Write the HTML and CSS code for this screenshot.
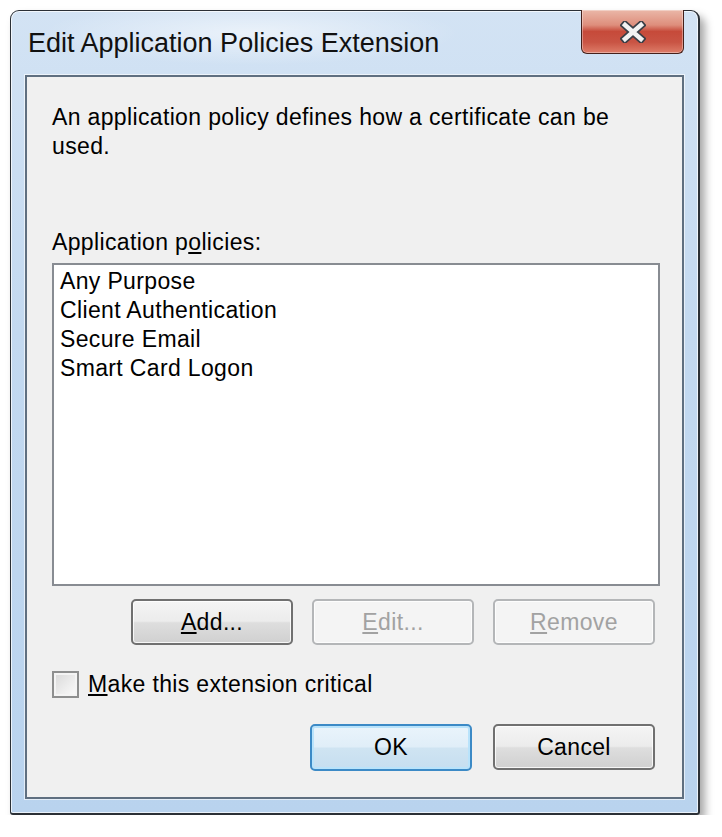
FILE: index.html
```html
<!DOCTYPE html>
<html>
<head>
	<meta charset="UTF-8">
	<title>Edit Application Policies Extension</title>
	<link rel="stylesheet" href="styles.css">
</head>
<body>
	<div class="window">
		<div class="titlebar">
			<div class="title">Edit Application Policies Extension</div>
			<div class="close">
				<svg width="26" height="22" viewBox="0 0 26 22">
					<path d="M5 4 L21 18 M21 4 L5 18" stroke="#3a3f47" stroke-width="8" stroke-linecap="square"/>
					<path d="M5 4 L21 18 M21 4 L5 18" stroke="#f2f2f2" stroke-width="4.5" stroke-linecap="square"/>
				</svg>
			</div>
		</div>

		<div class="panel">
			<p class="desc">An application policy defines how a certificate can be<br>used.</p>

			<div class="label">Application p<u>o</u>licies:</div>
			<div class="listbox">
				<div class="item">Any Purpose</div>
				<div class="item">Client Authentication</div>
				<div class="item">Secure Email</div>
				<div class="item">Smart Card Logon</div>
			</div>

			<div class="button-row">
				<button class="btn"><u>A</u>dd...</button>
				<button class="btn off"><u>E</u>dit...</button>
				<button class="btn off"><u>R</u>emove</button>
			</div>

			<label class="checkrow">
				<span class="check"></span>
				<span><u>M</u>ake this extension critical</span>
			</label>

			<div class="button-row bottom">
				<button class="btn default">OK</button>
				<button class="btn">Cancel</button>
			</div>
		</div>
	</div>
</body>
</html>
```

FILE: styles.css
```css
body {
	margin: 0;
	background: #ffffff;
	font-family: "Liberation Sans", Arial, sans-serif;
	color: #000;
}

.window {
	box-sizing: border-box;
	margin: 10px 0 0 10px;
	width: 690px;
	height: 805px;
	border: 1px solid #2b3036;
	border-right-width: 2px;
	border-bottom-width: 2px;
	border-radius: 9px 9px 3px 3px;
	background:
		radial-gradient(ellipse 260px 40px at 240px 22px, rgba(255,255,255,0.55), rgba(255,255,255,0) 80%),
		linear-gradient(180deg, #d3e3f4 0%, #c3d9f0 40%, #b9d3ee 100%);
	box-shadow: inset 0 0 0 1px rgba(255,255,255,0.7), 5px 6px 9px rgba(0,0,0,0.35);
	padding: 0 14px 14px 14px;
}

.titlebar {
	display: flex;
	justify-content: space-between;
	height: 64px;
	padding-left: 3px;
}

.title {
	font-size: 27px;
	padding-top: 17px;
	color: #111;
}

.close {
	box-sizing: border-box;
	width: 103px;
	height: 44px;
	margin-top: -1px;
	border: 1px solid #45201a;
	border-top: none;
	border-radius: 0 0 6px 6px;
	background: linear-gradient(180deg, #eab7a8 0%, #de8e7c 35%, #c64a3a 50%, #c95444 75%, #de7d69 100%);
	box-shadow: inset 0 0 0 1px rgba(255,255,255,0.35);
	display: flex;
	align-items: center;
	justify-content: center;
}

.panel {
	box-sizing: border-box;
	height: 724px;
	border: 2px solid #5f6f80;
	background: #f0f0f0;
	box-shadow: 0 0 0 1px rgba(255,255,255,0.6);
	padding: 26px 22px 0 25px;
	font-size: 23px;
	line-height: 29px;
	letter-spacing: 0.35px;
}

.desc {
	margin: 0;
	white-space: nowrap;
}

.label {
	margin-top: 67px;
}

.listbox {
	box-sizing: border-box;
	height: 323px;
	margin-top: 6px;
	border: 2px solid #888c92;
	background: #ffffff;
	padding: 2px 0 0 6px;
}

.button-row {
	display: flex;
	justify-content: flex-end;
	gap: 19px;
	margin-top: 13px;
	margin-right: 5px;
}

.button-row.bottom {
	gap: 21px;
	margin-top: 26px;
}

.btn {
	box-sizing: border-box;
	width: 162px;
	height: 46px;
	border: 2px solid #707070;
	border-radius: 5px;
	background: linear-gradient(180deg, #f4f4f4 0%, #ececec 48%, #dedede 52%, #d0d0d0 100%);
	box-shadow: inset 0 0 0 1px rgba(255,255,255,0.8);
	font-family: "Liberation Sans", Arial, sans-serif;
	font-size: 23px;
	letter-spacing: 0.35px;
	color: #000;
	padding: 0;
}

.btn.off {
	border-color: #b4b6b8;
	background: #f4f4f4;
	color: #a2a2a2;
}

.btn.default {
	border-color: #3c8ac6;
	background: linear-gradient(180deg, #eaf4fb 0%, #e0eef8 48%, #cfe4f2 52%, #c6def0 100%);
	box-shadow: inset 0 0 0 2px #b9e3fb;
	height: 47px;
}

.checkrow {
	display: flex;
	align-items: center;
	gap: 9px;
	margin-top: 25px;
	height: 28px;
}

.check {
	box-sizing: border-box;
	width: 27px;
	height: 27px;
	border: 2px solid #8e8f8f;
	background: linear-gradient(135deg, #d8d8d8 0%, #eeeeee 60%, #fbfbfb 100%);
	box-shadow: inset 0 0 0 2px #f4f4f4;
}
```
